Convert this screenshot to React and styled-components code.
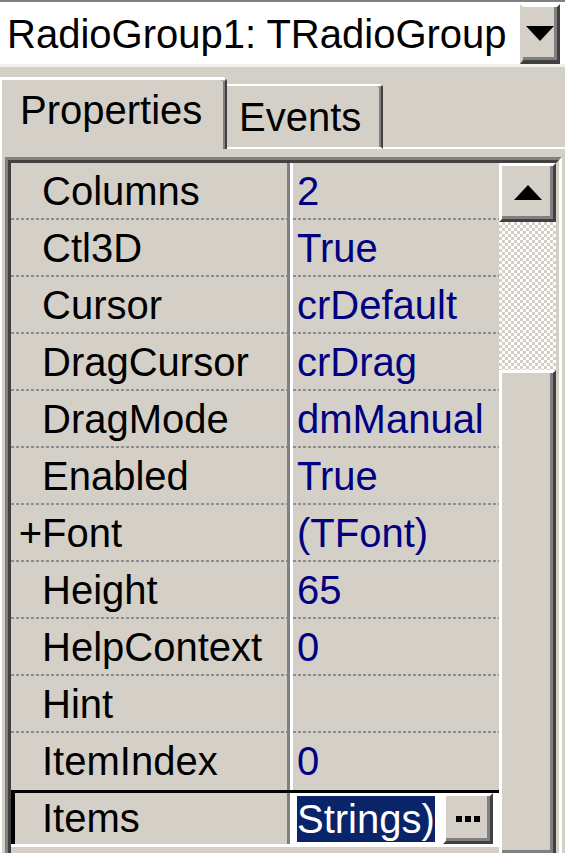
import React from 'react'
import styled, { createGlobalStyle, css } from 'styled-components'

const GlobalStyle = createGlobalStyle`
html, body {
  margin: 0;
  padding: 0;
  background: #d4d0c8;
  overflow: hidden;
}
body {
  font-family: "Liberation Sans", Arial, sans-serif;
}
`

const raised = css`
  background: #d4d0c8;
  border-top: 3px solid #fff;
  border-left: 3px solid #fff;
  border-right: 3px solid #404040;
  border-bottom: 3px solid #404040;
  box-shadow: inset -3px -3px 0 #808080;
  box-sizing: border-box;
`

const Inspector = styled.div`
  width: 565px;
  height: 853px;
  overflow: hidden;
  background: #d4d0c8;
  display: flex;
  flex-direction: column;
  font-size: 40px;
  color: #000;
`

const Combo = styled.div`
  display: flex;
  height: 60px;
  padding: 2px 5px 0 0;
  box-sizing: content-box;
  background: #fff;
  border-top: 2px solid #808080;
  border-bottom: 3px solid #f2f1ee;
`

const ComboText = styled.div`
  flex: 1;
  display: flex;
  align-items: center;
  padding-left: 7px;
  white-space: nowrap;
  overflow: hidden;
  line-height: 46px;
`

const DropButton = styled.div`
  ${raised};
  width: 40px;
  display: flex;
  align-items: center;
  justify-content: center;
  border-left-color: #d4d0c8;
  border-bottom-width: 4px;
`

const TabStrip = styled.div`
  display: flex;
  align-items: flex-end;
  height: 72px;
  margin-top: 10px;
`

const Tab = styled.div`
  box-sizing: border-box;
  line-height: 46px;
  white-space: nowrap;
  ${p => p.$active ? css`
    width: 227px;
    height: 72px;
    padding: 7px 0 0 18px;
    border-top: 3px solid #fff;
    border-left: 2px solid #fff;
    border-right: 2px solid #404040;
    border-top-right-radius: 5px;
    box-shadow: inset -2px 0 0 #808080;
  ` : css`
    width: 156px;
    height: 65px;
    padding: 8px 0 0 12px;
    border-top: 2px solid #fff;
    border-right: 2px solid #404040;
    border-bottom: 2px solid #fff;
    border-top-right-radius: 4px;
    box-shadow: inset -2px 0 0 #808080;
  `}
`

const TabFiller = styled.div`
  flex: 1;
  height: 2px;
  background: #fff;
`

const Sheet = styled.div`
  flex: 1;
  min-height: 0;
  display: flex;
  padding: 8px 3px 0 3px;
  border-left: 2px solid #fff;
`

const Frame = styled.div`
  flex: 1;
  display: flex;
  border-top: 3px solid #808080;
  border-left: 3px solid #808080;
  border-right: 3px solid #fff;
`

const FrameInner = styled.div`
  flex: 1;
  display: flex;
  border-top: 3px solid #404040;
  border-left: 3px solid #404040;
  border-right: 3px solid #d4d0c8;
`

const Rows = styled.div`
  flex: 1;
  display: flex;
  flex-direction: column;
`

const dotted = css`
  background-image: repeating-linear-gradient(90deg, #8e8e8e 0 3px, transparent 3px 5px);
  background-position: left bottom;
  background-size: 100% 2px;
  background-repeat: no-repeat;
`

const Row = styled.div`
  display: grid;
  grid-template-columns: 276px 6px 1fr;
  height: 57px;
  flex-shrink: 0;
  box-sizing: border-box;
  ${p => p.$selected && css`
    border-top: 3px solid #000;
    border-bottom: 3px solid #fff;
  `}
`

const NameCell = styled.div`
  display: flex;
  align-items: center;
  white-space: nowrap;
  ${p => !p.$noLine && dotted};
  ${p => p.$selected && css`box-shadow: inset 4px 0 0 #000;`}
`

const Expander = styled.span`
  width: 31px;
  flex-shrink: 0;
  text-align: right;
`

const Divider = styled.div`
  background: linear-gradient(90deg, #808080 0 3px, #fff 3px 6px);
`

const ValueCell = styled.div`
  display: flex;
  align-items: center;
  padding-left: 4px;
  color: #000080;
  white-space: nowrap;
  overflow: hidden;
  ${p => !p.$noLine && dotted};
`

const Edit = styled.div`
  flex: 1;
  align-self: stretch;
  display: flex;
  align-items: stretch;
  margin-left: -4px;
  padding: 0 6px 0 4px;
  background: #fff;
`

const Highlight = styled.span`
  display: flex;
  align-items: center;
  margin: 3px 0 2px;
  background: #0a246a;
  color: #fff;
`

const EllipsisButton = styled.div`
  ${raised};
  width: 50px;
  margin-left: auto;
  display: flex;
  align-items: center;
  justify-content: center;
  gap: 3px;
`

const Dot = styled.span`
  width: 6px;
  height: 6px;
  background: #000;
`

const ScrollBar = styled.div`
  width: 57px;
  flex-shrink: 0;
  display: flex;
  flex-direction: column;
`

const ArrowButton = styled.div`
  ${raised};
  height: 59px;
  display: flex;
  align-items: center;
  justify-content: center;
  flex-shrink: 0;
`

const Track = styled.div`
  height: 148px;
  flex-shrink: 0;
  background-color: #fff;
  background-image: repeating-conic-gradient(#d4d0c8 0 25%, #fff 0 50%);
  background-size: 6px 6px;
`

const Thumb = styled.div`
  ${raised};
  flex: 1;
  border-bottom: none;
`

const Triangle = ({ up }) => (
  <svg width="28" height="15" viewBox="0 0 28 15">
    <polygon points={up ? '14,0 28,15 0,15' : '0,0 28,0 14,15'} fill="#000" />
  </svg>
)

const props = [
  { name: 'Columns', value: '2' },
  { name: 'Ctl3D', value: 'True' },
  { name: 'Cursor', value: 'crDefault' },
  { name: 'DragCursor', value: 'crDrag' },
  { name: 'DragMode', value: 'dmManual' },
  { name: 'Enabled', value: 'True' },
  { name: 'Font', value: '(TFont)', expand: true },
  { name: 'Height', value: '65' },
  { name: 'HelpContext', value: '0' },
  { name: 'Hint', value: '' },
  { name: 'ItemIndex', value: '0' },
  { name: 'Items', value: 'Strings)', selected: true },
]

const App = () => {
  return (
    <>
      <GlobalStyle />
      <Inspector>
        <Combo>
          <ComboText>RadioGroup1: TRadioGroup</ComboText>
          <DropButton><Triangle /></DropButton>
        </Combo>
        <TabStrip>
          <Tab $active>Properties</Tab>
          <Tab>Events</Tab>
          <TabFiller />
        </TabStrip>
        <Sheet>
          <Frame>
            <FrameInner>
              <Rows>
                {props.map((p, i) => {
                  const noLine = p.selected || (props[i + 1] && props[i + 1].selected)
                  return (
                    <Row key={p.name} $selected={p.selected}>
                      <NameCell $noLine={noLine} $selected={p.selected}>
                        <Expander>{p.expand ? '+' : ''}</Expander>
                        {p.name}
                      </NameCell>
                      <Divider />
                      <ValueCell $noLine={noLine}>
                        {p.selected ? (
                          <Edit>
                            <Highlight>{p.value}</Highlight>
                            <EllipsisButton><Dot /><Dot /><Dot /></EllipsisButton>
                          </Edit>
                        ) : p.value}
                      </ValueCell>
                    </Row>
                  )
                })}
              </Rows>
              <ScrollBar>
                <ArrowButton><Triangle up /></ArrowButton>
                <Track />
                <Thumb />
              </ScrollBar>
            </FrameInner>
          </Frame>
        </Sheet>
      </Inspector>
    </>
  )
}

export default App
